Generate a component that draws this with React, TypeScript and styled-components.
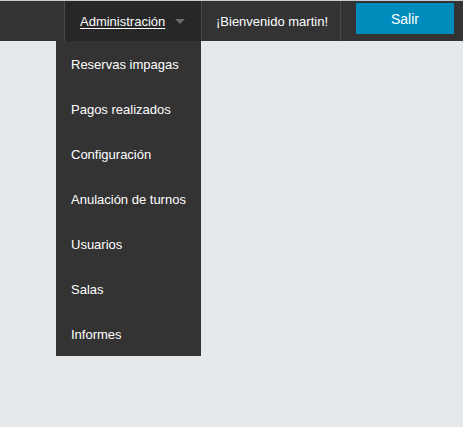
import React from "react";
import styled, { createGlobalStyle } from "styled-components";

const GlobalStyle = createGlobalStyle`
  html, body {
    margin: 0;
    padding: 0;
    background: #e6e9ec;
    font-family: "Liberation Sans", Arial, sans-serif;
  }
`;

const Page = styled.div`
  width: 463px;
  height: 427px;
  background: #e6e9ec;
  border-top: 1px solid #c3ccd5;
  box-sizing: border-box;
`;

const NavBar = styled.nav`
  height: 40px;
  background: #333333;
  display: flex;
  justify-content: flex-end;
  align-items: stretch;
`;

const NavItem = styled.div<{ $dark?: boolean; $width: number; $pad: number }>`
  position: relative;
  box-sizing: border-box;
  width: ${(p) => p.$width}px;
  flex: none;
  display: flex;
  align-items: center;
  padding: 0 0 0 ${(p) => p.$pad}px;
  border-left: 1px solid #4a4a4a;
  background: ${(p) => (p.$dark ? "#272727" : "transparent")};
  color: #ffffff;
  font-size: 13px;
  white-space: nowrap;
`;

const MenuLink = styled.span`
  color: #ffffff;
  text-decoration: underline;
  text-underline-offset: 2px;
`;

const Caret = styled.span`
  display: inline-block;
  width: 0;
  height: 0;
  margin-left: 10px;
  margin-top: 1px;
  border-left: 5px solid transparent;
  border-right: 5px solid transparent;
  border-top: 5px solid #6a6a6a;
`;

const ButtonSlot = styled.div`
  box-sizing: border-box;
  width: 123px;
  flex: none;
  display: flex;
  align-items: flex-start;
  padding: 2px 9px 0 15px;
  border-left: 1px solid #4a4a4a;
`;

const LogoutButton = styled.button`
  box-sizing: border-box;
  width: 98px;
  height: 31px;
  padding: 0;
  border: none;
  background: #008bbd;
  color: #ffffff;
  font-family: "Liberation Sans", Arial, sans-serif;
  font-size: 14px;
  cursor: pointer;
`;

const Dropdown = styled.ul`
  position: absolute;
  top: 40px;
  right: 0;
  width: 145px;
  margin: 0;
  padding: 0;
  list-style: none;
  background: #333333;
`;

const DropdownItem = styled.li`
  box-sizing: border-box;
  height: 45px;
  display: flex;
  align-items: center;
  padding: 2px 0 0 15px;
  color: #ffffff;
  font-size: 13px;
`;

const items = [
  "Reservas impagas",
  "Pagos realizados",
  "Configuración",
  "Anulación de turnos",
  "Usuarios",
  "Salas",
  "Informes",
];

export default function App() {
  return (
    <>
      <GlobalStyle />
      <Page>
        <NavBar>
          <NavItem $dark $width={137} $pad={15}>
            <MenuLink>Administración</MenuLink>
            <Caret />
            <Dropdown>
              {items.map((it) => (
                <DropdownItem key={it}>{it}</DropdownItem>
              ))}
            </Dropdown>
          </NavItem>
          <NavItem $width={139} $pad={14}>
            ¡Bienvenido martin!
          </NavItem>
          <ButtonSlot>
            <LogoutButton>Salir</LogoutButton>
          </ButtonSlot>
        </NavBar>
      </Page>
    </>
  );
}
